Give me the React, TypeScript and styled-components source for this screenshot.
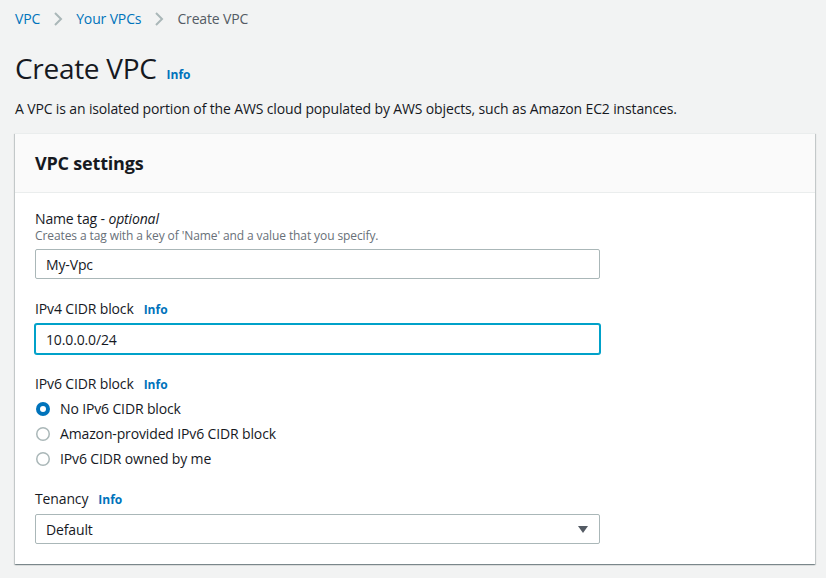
import React from "react";
import styled, { createGlobalStyle } from "styled-components";

const Global = createGlobalStyle`
  html, body { margin: 0; padding: 0; background: #f2f3f3; }
  body { font-family: "Open Sans", "Noto Sans", Arial, sans-serif; color: #16191f; letter-spacing: -0.14px; }
  * { box-sizing: border-box; }
`;

const Page = styled.div`
  width: 826px;
  height: 578px;
  padding: 0 11px 0 15px;
  background: #f2f3f3;
  overflow: hidden;
`;

const Crumbs = styled.nav`
  display: flex;
  align-items: center;
  height: 38px;
  font-size: 14px;
  line-height: 20px;
  gap: 13px;
`;

const CrumbLink = styled.a`
  color: #0073bb;
  text-decoration: none;
`;

const CrumbCurrent = styled.span`
  color: #545b64;
`;

const Chevron = () => (
  <svg width="10" height="16" viewBox="0 0 10 16">
    <polyline points="2,2 8,8 2,14" fill="none" stroke="#aab7b8" strokeWidth="2" />
  </svg>
);

const TitleRow = styled.div`
  display: flex;
  align-items: baseline;
  gap: 10px;
  margin-top: 12px;
`;

const Title = styled.h1`
  margin: 0;
  font-size: 28px;
  line-height: 36px;
  font-weight: 400;
  letter-spacing: -0.3px;
  color: #16191f;
`;

const Info = styled.a`
  color: #0073bb;
  font-weight: 700;
  font-size: 12px;
  letter-spacing: 0;
  text-decoration: none;
`;

const Description = styled.p`
  margin: 13px 0 0 0;
  font-size: 14px;
  line-height: 20px;
  color: #16191f;
`;

const Card = styled.section`
  margin-top: 14px;
  background: #fff;
  box-shadow: 0 1px 1px 0 rgba(0, 28, 36, 0.3), 1px 1px 1px 0 rgba(0, 28, 36, 0.15),
    -1px 1px 1px 0 rgba(0, 28, 36, 0.15);
  border-top: 1px solid #eaeded;
`;

const CardHeader = styled.header`
  background: #fafafa;
  border-bottom: 1px solid #eaeded;
  padding: 18px 20px;
`;

const CardTitle = styled.h2`
  margin: 0;
  font-size: 18px;
  line-height: 22px;
  font-weight: 700;
  letter-spacing: -0.2px;
`;

const CardBody = styled.div`
  padding: 16px 20px 20px 20px;
  display: flex;
  flex-direction: column;
  gap: 20px;
`;

const Field = styled.div`
  display: flex;
  flex-direction: column;
`;

const Label = styled.label`
  display: flex;
  align-items: baseline;
  gap: 10px;
  font-size: 14px;
  line-height: 20px;
  color: #16191f;
  margin-bottom: 4px;
`;

const Optional = styled.i`
  font-style: italic;
`;

const Hint = styled.div`
  font-size: 12px;
  line-height: 16px;
  color: #687078;
  letter-spacing: -0.1px;
  margin-top: -5px;
  margin-bottom: 5px;
`;

const Input = styled.div<{ $focused?: boolean }>`
  width: 565px;
  height: 30px;
  display: flex;
  align-items: center;
  padding: 0 10px;
  font-size: 14px;
  background: #fff;
  border: 1px solid ${(p) => (p.$focused ? "#00a1c9" : "#aab7b8")};
  box-shadow: ${(p) => (p.$focused ? "0 0 0 1px #00a1c9" : "none")};
  border-radius: 2px;
  color: #16191f;
  justify-content: space-between;
`;

const RadioGroup = styled.div`
  display: flex;
  flex-direction: column;
  margin-top: -3px;
  margin-bottom: -2px;
`;

const RadioRow = styled.div`
  display: flex;
  align-items: center;
  gap: 10px;
  height: 25px;
  font-size: 14px;
  padding-left: 1px;
`;

const Radio = ({ checked }: { checked?: boolean }) => (
  <svg width="14" height="14" viewBox="0 0 14 14">
    {checked ? (
      <>
        <circle cx="7" cy="7" r="7" fill="#0073bb" />
        <circle cx="7" cy="7" r="3" fill="#fff" />
      </>
    ) : (
      <circle cx="7" cy="7" r="6.25" fill="#fff" stroke="#aab7b8" strokeWidth="1.5" />
    )}
  </svg>
);

const Caret = () => (
  <svg width="12" height="10" viewBox="0 0 12 10">
    <polygon points="1,2 11,2 6,9" fill="#545b64" />
  </svg>
);

export default function App() {
  return (
    <>
      <Global />
      <Page>
        <Crumbs>
          <CrumbLink>VPC</CrumbLink>
          <Chevron />
          <CrumbLink>Your VPCs</CrumbLink>
          <Chevron />
          <CrumbCurrent>Create VPC</CrumbCurrent>
        </Crumbs>
        <TitleRow>
          <Title>Create VPC</Title>
          <Info>Info</Info>
        </TitleRow>
        <Description>
          A VPC is an isolated portion of the AWS cloud populated by AWS objects, such as Amazon EC2 instances.
        </Description>
        <Card>
          <CardHeader>
            <CardTitle>VPC settings</CardTitle>
          </CardHeader>
          <CardBody>
            <Field>
              <Label>
                <span>
                  Name tag - <Optional>optional</Optional>
                </span>
              </Label>
              <Hint>Creates a tag with a key of 'Name' and a value that you specify.</Hint>
              <Input>My-Vpc</Input>
            </Field>
            <Field>
              <Label>
                IPv4 CIDR block <Info>Info</Info>
              </Label>
              <Input $focused>10.0.0.0/24</Input>
            </Field>
            <Field>
              <Label>
                IPv6 CIDR block <Info>Info</Info>
              </Label>
              <RadioGroup>
                <RadioRow>
                  <Radio checked />
                  No IPv6 CIDR block
                </RadioRow>
                <RadioRow>
                  <Radio />
                  Amazon-provided IPv6 CIDR block
                </RadioRow>
                <RadioRow>
                  <Radio />
                  IPv6 CIDR owned by me
                </RadioRow>
              </RadioGroup>
            </Field>
            <Field>
              <Label>
                Tenancy <Info>Info</Info>
              </Label>
              <Input>
                Default
                <Caret />
              </Input>
            </Field>
          </CardBody>
        </Card>
      </Page>
    </>
  );
}
